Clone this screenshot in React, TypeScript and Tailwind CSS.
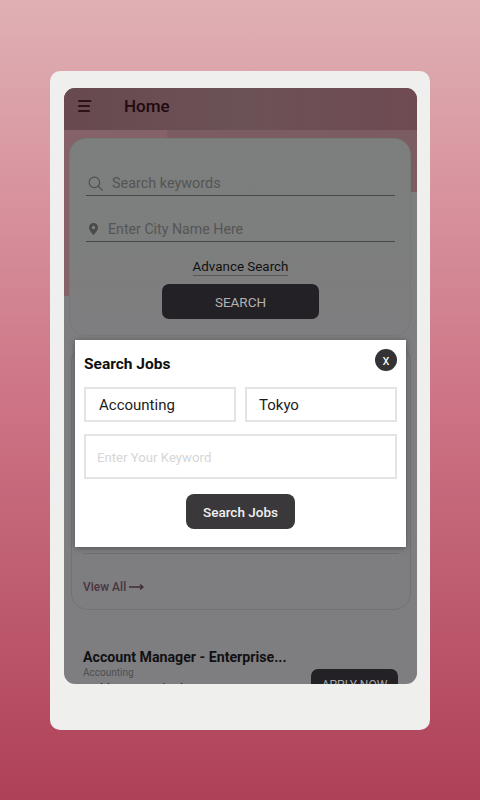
import React from "react";

const font = { fontFamily: "Roboto, 'Liberation Sans', sans-serif" };

export default function App() {
  return (
    <div
      style={font}
      className="h-[800px] w-[480px] overflow-hidden bg-gradient-to-b from-[#dfb0b5] via-[#cd7486] to-[#ae4058] px-[50px] pt-[71px]"
    >
      <div className="h-[659px] w-[380px] rounded-[10px] bg-[#efefed] px-[14px] pt-[17px]">
        <div className="relative h-[596px] w-[353px] overflow-hidden rounded-[11px] bg-[#7e7d7f]">
          {/* tinted backdrop behind the first card */}
          <div className="absolute left-0 top-[42px] h-[166px] w-[120px] bg-[#85626a]" />
          <div className="absolute right-0 top-[42px] h-[62px] w-[250px] bg-[#7c5c63]" />

          <header className="relative flex h-[42px] items-center bg-gradient-to-r from-[#67494f] via-[#6b5256] to-[#6f4a53] pb-[6px] pl-[14px]">
            <svg width="14" height="14" viewBox="0 0 14 14">
              <rect x="0" y="1" width="13.5" height="2" rx="1" fill="#2b1318" />
              <rect x="0" y="6" width="12" height="2" rx="1" fill="#2b1318" />
              <rect x="0" y="11" width="12" height="2" rx="1" fill="#2b1318" />
            </svg>
            <h1 className="ml-[32px] text-[17px] font-medium leading-none text-[#22090e]">Home</h1>
          </header>

          <main className="relative">
            <section className="ml-[5px] mt-[8px] h-[198px] w-[342px] rounded-[17px] border border-[#767a77] bg-gradient-to-b from-[#7c7f7d] to-[#7e7d7f] pl-[16px] pr-[15px] pt-[36px]">
              <div className="flex h-[21px] items-center border-b border-[#474747] pb-[1px] pl-[2px]">
                <svg width="15" height="15" viewBox="0 0 16 16" fill="none" stroke="#4d4d4d" strokeWidth="1.2" className="-mt-[2px]">
                  <circle cx="6.8" cy="6.8" r="5.6" />
                  <path d="M10.9 10.9 L15.2 15.2" strokeLinecap="round" />
                </svg>
                <span className="ml-[9px] text-[14.4px] leading-none text-[#545454]">Search keywords</span>
              </div>
              <div className="mt-[25px] flex h-[21px] items-center border-b border-[#474747] pb-[4px] pl-[3px]">
                <svg width="9" height="12" viewBox="0 0 9 12">
                  <path
                    fillRule="evenodd"
                    fill="#4a4a4a"
                    d="M4.5 0C2 0 0 2 0 4.4 0 7.6 4.5 12 4.5 12S9 7.6 9 4.4C9 2 7 0 4.5 0Zm0 2.8a1.7 1.7 0 1 1 0 3.4 1.7 1.7 0 0 1 0-3.4Z"
                  />
                </svg>
                <span className="ml-[10px] text-[14.2px] leading-none text-[#555555]">Enter City Name Here</span>
              </div>
              <div className="mt-[17px] flex justify-center">
                <span className="border-b border-[#55585a] pb-px text-[13.4px] leading-[15px] text-[#111111]">Advance Search</span>
              </div>
              <div className="mt-[8px] flex justify-center">
                <button className="flex h-[35px] w-[157px] items-center justify-center rounded-[7px] bg-[#232125] pt-[1px] text-[13.5px] text-[#b2b2b2]">
                  SEARCH
                </button>
              </div>
            </section>

            <section className="ml-[7px] mt-[9px] flex h-[265px] w-[340px] flex-col justify-end rounded-[17px] border border-[#727174] px-[11px] pb-[14px]">
              <div className="mb-[25px] border-t border-[#6f6e71]" />
              <div className="flex items-center text-[12px] font-medium leading-[16px] text-[#4a3640]">
                View All
                <svg width="15" height="8" viewBox="0 0 15 8" className="ml-[3px]" fill="none" stroke="#3f2d35" strokeWidth="1.4">
                  <path d="M0 4 H14 M11 1.5 L14 4 L11 6.5" />
                </svg>
              </div>
            </section>

            <section className="relative mt-[38px] flex pl-[19px] pr-[19px]">
              <div className="w-[220px]">
                <div className="whitespace-nowrap text-[14.2px] font-bold leading-[18px] text-[#111113]">
                  Account Manager - Enterprise...
                </div>
                <div className="mt-[0px] text-[10px] leading-[13px] text-[#4e4e50]">Accounting</div>
                <div className="mt-[3px] text-[12px] leading-[14px] text-[#222224]">Build Team and Advise Remote</div>
              </div>
              <button className="ml-auto mt-[21px] flex h-[32px] w-[87px] items-start justify-center rounded-[7px] bg-[#232125] pt-[8px] text-[12px] leading-[16px] text-[#a8a8a8]">
                APPLY NOW
              </button>
            </section>
          </main>

          {/* dialog */}
          <div className="absolute left-[11px] top-[252px] h-[207px] w-[331px] bg-white px-[9px] pt-[9px] shadow-[0_1px_6px_rgba(0,0,0,0.35)]">
            <div className="flex h-[22px] items-center justify-between">
              <h2 className="mt-[10px] text-[15.5px] font-bold leading-none text-[#0e0e0e]">Search Jobs</h2>
              <button className="flex h-[22px] w-[22px] items-center justify-center rounded-full bg-[#333235] pb-[1px] text-[14px] leading-none text-white">
                x
              </button>
            </div>
            <div className="mt-[16px] flex gap-[9px]">
              <div className="flex h-[35px] w-[152px] items-center border-2 border-[#e4e4e4] pl-[13px] pt-[2px] text-[15px] text-[#1c1c1c]">Accounting</div>
              <div className="flex h-[35px] w-[152px] items-center border-2 border-[#e4e4e4] pl-[12px] pt-[2px] text-[15px] text-[#1c1c1c]">Tokyo</div>
            </div>
            <div className="mt-[12px] flex h-[45px] w-[313px] items-center border-2 border-[#e4e4e4] pl-[11px] pt-[2px] text-[13.2px] text-[#d6d6d6]">
              Enter Your Keyword
            </div>
            <div className="mt-[15px] flex justify-center">
              <button className="flex h-[35px] w-[109px] items-center justify-center rounded-[8px] bg-[#3a383b] pt-[2px] text-[13.5px] font-medium text-[#f2f2f2]">
                Search Jobs
              </button>
            </div>
          </div>
        </div>
      </div>
    </div>
  );
}
